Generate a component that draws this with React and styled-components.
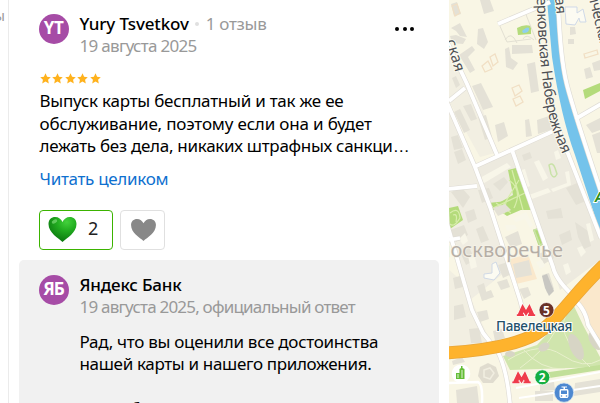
import React from "react";
import styled, { createGlobalStyle } from "styled-components";

const GlobalStyle = createGlobalStyle`
  * {
    box-sizing: border-box;
  }

  body {
    margin: 0;
    background: #fff;
    font-family: "Noto Sans", "Open Sans", sans-serif;
    overflow: hidden;
  }
`;

const Page = styled.div`
  display: grid;
  grid-template-columns: 9px 440px 151px;
  width: 600px;
  height: 403px;
  overflow: hidden;
`;

const Edge = styled.div`
  border-right: 1px solid #ebebeb;
  padding-top: 4px;
  display: flex;
  justify-content: flex-end;
  overflow: hidden;
  color: #999;
  font-size: 14px;
  line-height: 24px;
`;

const EdgeText = styled.span`
  margin-right: 3px;
`;

const Panel = styled.main`
  padding: 0 10px;
  background: #fff;
  overflow: hidden;
`;

const Review = styled.section`
  padding: 13px 20px 0 20.5px;
`;

const Header = styled.div`
  display: flex;
  align-items: flex-start;
  height: 46px;
`;

const Avatar = styled.div`
  width: 30px;
  height: 30px;
  margin: 1px 11px 0 -1px;
  flex: none;
  border-radius: 50%;
  background: #a64ca6;
  color: #fff;
  font-size: 17px;
  font-weight: 700;
  line-height: 27px;
  text-align: center;
  letter-spacing: ${(props) => props.$spacing || "0"};
`;

const Author = styled.div`
  flex: 1;
  white-space: nowrap;
`;

const Name = styled.span`
  color: #000;
  font-size: 17px;
  font-weight: 500;
  line-height: 22px;
  letter-spacing: ${(props) => props.$spacing};
`;

const NameRow = styled.div`
  display: flex;
  align-items: center;
  height: 22px;
`;

const Dot = styled.span`
  width: 4px;
  height: 4px;
  margin: 0 7px 0 6px;
  border-radius: 50%;
  background: #e0e0e0;
`;

const Muted = styled.div`
  color: #999;
  font-size: 17px;
  line-height: 22px;
  letter-spacing: ${(props) => props.$spacing};
`;

const MenuButton = styled.button`
  display: flex;
  justify-content: space-between;
  width: 19px;
  margin: 14px 5px 0 0;
  padding: 0;
  border: 0;
  background: none;
`;

const MenuDot = styled.i`
  width: 4px;
  height: 4px;
  border-radius: 50%;
  background: #000;
`;

const Stars = styled.div`
  display: flex;
  gap: 1.6px;
  height: 11px;
  margin-top: 14px;
`;

const Text = styled.div`
  margin-top: ${(props) => props.$top};
  color: #000;
  font-size: 17px;
  line-height: ${(props) => props.$leading};
`;

const Line = styled.div`
  white-space: nowrap;
  letter-spacing: ${(props) => props.$spacing};
`;

const Ellipsis = styled.span`
  font-family: "Liberation Sans", sans-serif;
  line-height: 1;
`;

const More = styled.a`
  display: block;
  margin-top: 10px;
  color: #0e70cf;
  font-size: 17px;
  line-height: 22px;
  letter-spacing: -0.3px;
`;

const Reactions = styled.div`
  display: flex;
  gap: 7px;
  margin: 20px 0 0 -0.5px;
`;

const Reaction = styled.button`
  display: flex;
  align-items: center;
  width: ${(props) => (props.$active ? 74 : 45)}px;
  height: 40px;
  padding: 0 0 0 ${(props) => (props.$active ? 7 : 9)}px;
  border: 1px solid ${(props) => (props.$active ? "#3bb300" : "#e0e0e0")};
  border-radius: 4px;
  background: #fff;
  color: #222;
  font-family: inherit;
  font-size: 18px;
`;

const Count = styled.span`
  margin: -3px 0 0 10px;
`;

const Reply = styled.section`
  height: 160px;
  margin-top: 10px;
  padding: 14px 20px 0;
  border-radius: 5px;
  background: #f1f1f1;
`;

const ReplyHeader = styled(Header)`
  padding-left: 0.5px;
`;

const ReplyBody = styled.div`
  padding-left: 40.5px;
`;

const Map = styled.svg`
  display: block;
  width: 151px;
  height: 403px;
`;

function Star() {
  return (
    <svg width="11" height="11" viewBox="0 0 22 22">
      <path
        fill="#ffb21d"
        d="M11 .5l3.2 7 7.3.8-5.4 5.1 1.5 7.6-6.6-3.8L4.4 21l1.5-7.6L.5 8.3l7.3-.8z"
      />
    </svg>
  );
}

const HEART =
  "M15 26C11 22 1 17 1 8C1 3.5 4 1 7.7 1C11 1 13.8 3 15 6C16.2 3 19 1 22.3 1C26 1 29 3.500 29 8C29 17 19 22 15 26Z";

const buildings = [
  "451,4 457,2 461,14 454,16", "480,0 490,0 494,11 484,14", "451,28 460,23 467,37 460,36 456,31",
  "450,36 456,35 466,39 463,44 452,43", "478,29 483,28 488,42 484,49 477,44", "459,55 472,46 475,50 468,57 475,70 470,73",
  "472,86 481,83 493,107 483,110", "512,45 532,45 533,53 512,54", "505,49 509,47 511,58 518,63 513,70 506,67",
  "527,64 535,62 539,91 531,93", "568,39 574,39 574,44 568,44", "570,27 575,27 576,34 570,35",
  "584,69 590,67 593,77 586,79", "592,63 600,60 600,70 594,71", "452,78 456,76 460,85 456,88",
  "454,112 460,109 470,130 464,133", "463,106 471,104 477,119 471,121", "478,117 486,115 492,137 485,140",
  "495,125 504,122 508,136 498,142", "537,120 552,115 556,128 538,134", "525,120 529,119 532,136 526,137",
  "586,125 600,118 600,130 592,133", "592,135 600,132 600,153 597,153", "451,137 458,135 463,148 454,150",
  "454,152 462,149 466,160 458,164", "451,192 462,188 470,197 463,208", "493,184 504,177 508,182 500,191",
  "478,190 489,188 493,198 482,203", "522,155 530,152 532,158 524,161", "566,188 577,183 586,201 576,205",
  "450,230 464,225 468,235 456,242", "465,212 474,209 477,219 468,223", "460,252 469,247 475,260 466,265",
  "476,229 483,226 489,240 481,243", "505,237 518,231 522,244 511,248", "493,208 505,204 511,210 498,216",
  "546,211 561,208 563,218 548,219", "575,222 588,231 591,246 584,249 578,237", "559,235 570,230 572,240 562,245",
  "513,264 529,260 532,275 516,278", "538,254 551,249 554,258 544,264", "542,275 549,273 554,289 547,293",
  "477,286 484,283 488,299 482,301", "498,265 508,262 514,273 503,278", "519,289 528,287 531,295 524,299",
  "453,278 463,275 467,286 455,289", "454,306 463,304 466,317 454,320", "469,329 479,328 482,343 471,343",
  "493,331 502,329 505,338 495,341", "477,312 487,310 489,319 480,322", "456,390 477,386 479,403 457,403",
  "540,383 554,382 555,390 540,391", "575,383 600,379 600,392 574,396", "535,391 553,391 553,401 535,401",
  "452,361 462,357 465,362 453,365", "483,293 491,290 494,297 485,300", "497,282 507,279 510,287 501,290",
];

const lightBlocks = [
  "478,179 507,163 511,167 481,185", "521,170 525,169 530,186 526,188", "534,162 539,160 548,178 543,181",
  "529,195 548,188 551,192 532,199", "565,172 569,171 571,185 553,192 551,189 567,183", "554,152 558,150 561,158 556,160",
  "513,219 526,212 533,225 530,228 525,219 516,222", "505,225 515,225 517,229 507,231", "459,239 465,233 468,241 463,245",
  "468,256 474,253 477,267 471,269", "563,265 568,263 571,272 566,275", "577,248 582,246 586,252 581,257",
  "586,224 590,223 594,240 590,242", "536,262 542,260 545,266 540,269", "553,125 557,123 560,128 555,130",
];

const outlines = [
  "452,6 457,4 460,13 455,16", "482,66 488,61 492,69 485,72", "490,57 495,54 498,62 493,66",
  "512,88 519,85 522,91 515,96", "513,99 520,96 523,102 516,106", "584,54 597,50 598,54 585,58",
];

const roads = [
  "M445,37 L467,84 L497,155", "M446,100 L475,167 L490,207 L520,300 L524,315", "M474,167 L560,128",
  "M512,150 L533,210 L553,267 Q556,281 577,299", "M558,-2 Q560,58 567,85 T601,192", "M558,128 L601,238",
  "M498,24 L550,2", "M577,118 L601,104", "M449,101 L465,88", "M448,189 L477,186",
  "M446,220 L472,310 L483,333 L498,352 Q507,370 510,404", "M449,240 L460,238", "M570,297 Q585,306 588,325 L602,348",
];

function MetroMark({ x, y }) {
  return (
    <path
      transform={`translate(${x} ${y})`}
      fill="#ef3c4b"
      stroke="#fff"
      strokeWidth="1"
      paintOrder="stroke"
      d="M0 12V10.300H1L5.700 0L9.200 6L12.700 0L17.400 10.300H18.400V12H11.200V10.300H12.300L11.700 8.300L9.200 12L6.700 8.300L6.100 10.300H7.200V12Z"
    />
  );
}

function CityMap() {
  return (
    <Map viewBox="449 0 151 403" fontFamily='"Noto Sans", sans-serif'>
      <rect x="449" width="151" height="403" fill="#f9f6e5" />
      <path fill="#edeadf" d="M474,167 L512,150 L558,130 L600,237 L600,260 L560,290 L533,210 L490,210Z" />
      <path fill="#f0ede2" d="M449,106 L475,167 L490,210 L510,268 L470,300 L449,230Z" />
      <path fill="#f2efe2" d="M449,270 L463,282 L492,345 L449,350Z M449,47 L483,110 L495,153 L480,157 L449,101Z" />
      <path fill="#fae8cc" d="M507,260 L528,254 L537,279 L516,284Z M577,293 L600,273 L600,340 L584,320Z" />

      <g fill="#b4db7b">
        <path d="M508,170 L516,168 L531,210 L490,210 L493,206 L513,195Z" />
        <path d="M488,203 L528,199 L530,206 L507,216Z" />
        <path d="M449,208 L458,206 L463,220 L450,229Z" />
        <path d="M517,28 Q524,24 531,26 V34 L518,35Z" />
        <path d="M583,90 L600,83 V91 L585,99Z" />
        <path d="M533,230 L538,228 L544,244 L539,247Z" />
      </g>
      <path fill="#d0e5ad" d="M573,304 L583,325 L600,357 V367 L510,370 L503,356 L537,345 L554,327Z" />
      <path fill="#c2df99" d="M535,374 L600,365 V370 L537,380Z" />
      <path fill="#8fd0ed" d="M522,31 Q527,26 529,28 Q530,33 523,33Z" />

      <g fill="none" stroke="#d8edac" strokeWidth="1.200">
        <path d="M512,170 L523,210 M503,206 L519,180 M493,208 L525,193 M509,180 Q523,190 514,208" />
        <path d="M496,203 L511,213 M506,202 L504,214" />
        <path d="M450,213 Q459,206 460,218 Q454,228 450,224 M453,215 Q458,213 456,222" />
      </g>
      <path fill="none" stroke="#e8f0cc" strokeWidth="1" d="M508,360 Q540,340 562,355 T600,360 M523,349 Q540,370 565,369 M570,310 Q550,330 590,367 M520,368 Q545,350 556,330" />

      <g fill="#e4e1d6">
        {buildings.map((points) => (
          <polygon key={points} points={points} />
        ))}
      </g>
      <g fill="#f8f6e9">
        {lightBlocks.map((points) => (
          <polygon key={points} points={points} />
        ))}
      </g>
      <g fill="none" stroke="#f1dfc4" strokeWidth="1.300">
        {outlines.map((points) => (
          <polygon key={points} points={points} />
        ))}
      </g>
      <path fill="none" stroke="#e3e0d3" strokeWidth="1" d="M499,24 L507,42 L531,39 M525,12 L536,40 M505,40 Q511,30 517,43 M523,39 Q526,33 534,40" />
      <path fill="#fcfbf2" stroke="#cfd9e8" strokeWidth="1" d="M565,7 H577 V13 L583,9 L586,22 L580,22 L579,18 L575,25 L566,24Z" />
      <path fill="#fcfbf2" stroke="#d0d9e6" strokeWidth="1" d="M492,264 L496,262 L500,273 L494,280 L484,278 V274 L492,273Z" />
      <path fill="#c8c7c2" d="M542,276 L547,274 L554,291 L549,296 L545,288Z" />
      <g fill="none" stroke="#c9e2a8" strokeWidth="1.500">
        <path d="M549,165 Q553,162 555,168 L557,174 Q554,180 551,174Z" />
        <path d="M534,230 L538,229 L543,243 L540,245Z" />
      </g>
      <g fill="#d7d5c5">
        <ellipse cx="576" cy="347" rx="6" ry="14" transform="rotate(-24 576 347)" />
        <ellipse cx="544" cy="347" rx="6" ry="4" transform="rotate(-30 544 347)" />
        <ellipse cx="510" cy="354" rx="5" ry="3" />
        <ellipse cx="595" cy="341" rx="5" ry="10" transform="rotate(-30 595 341)" />
      </g>
      <path fill="#e0dccf" d="M480,367 L488,363 L496,367 L499,376 L493,383 L483,383 L478,376Z" />
      <path fill="none" stroke="#f1eee1" strokeWidth="1.500" d="M484,370 L490,368 L494,373 L490,379 L484,377Z" />

      <path fill="#74c3eb" d="M547,0 H558 Q560,48 565,78 T585,149 L600,185 V232 L575,155 Q561,117 552,57Z" />

      <g fill="none" stroke="#dedbd4" strokeWidth="5" strokeLinejoin="round">
        {roads.map((d) => (
          <path key={d} d={d} />
        ))}
      </g>
      <g fill="none" stroke="#fff" strokeWidth="3.800" strokeLinejoin="round">
        {roads.map((d) => (
          <path key={d} d={d} />
        ))}
      </g>
      <path fill="none" stroke="#fff" strokeWidth="2.500" d="M449,383 L478,382 Q483,384 482,403" />
      <path fill="none" stroke="#fff" strokeWidth="1.800" d="M516,388 L600,372 M519,398 L600,386" />

      <path fill="none" stroke="#e8a63a" strokeWidth="13" d="M446,353 Q509,349 536,334 C557,322 568,300 604,265" />
      <path fill="none" stroke="#feb32d" strokeWidth="11.500" d="M446,353 Q509,349 536,334 C557,322 568,300 604,265" />

      <g fill="#4e5054" stroke="#fbf9ed" strokeWidth="2" paintOrder="stroke">
        <path id="quay" fill="none" stroke="none" d="M536.500,-12 Q538,57 546,104 Q550,128 567,164" />
        <text fontSize="15">
          <textPath href="#quay" startOffset="9" textLength="161">ерковская Набережная</textPath>
        </text>
        <text fontSize="14.500" transform="translate(555 -2) rotate(84)">ая</text>
        <text fontSize="15" transform="translate(588 -5) rotate(76)" textLength="56">ическая</text>
        <text fontSize="15" transform="translate(446 41) rotate(73)" textLength="33">ская</text>
      </g>
      <text x="435" y="257" fontSize="20" fill="#b5aea6" stroke="#f6f3e8" strokeWidth="1.500" paintOrder="stroke" textLength="128">москворечье</text>
      <text x="595" y="202" fontSize="14" fontWeight="700" fontStyle="italic" fill="#2e8f1d" stroke="#fff" strokeWidth="2" paintOrder="stroke">А</text>

      <MetroMark x={516.8} y={304} />
      <circle cx="546.500" cy="310" r="7.500" fill="#693127" stroke="#fff" strokeWidth=".7" />
      <text x="546.500" y="314.500" fontSize="12" fontWeight="700" fill="#fff" textAnchor="middle">5</text>
      <text x="496" y="331" fontSize="13.500" fontWeight="500" fill="#245069" stroke="#fff" strokeWidth="2" paintOrder="stroke" textLength="76.500">Павелецкая</text>
      <MetroMark x={512.3} y={371.300} />
      <circle cx="542.300" cy="377.300" r="7.500" fill="#14ae42" stroke="#fff" strokeWidth=".7" />
      <text x="542.300" y="381.700" fontSize="12" fontWeight="700" fill="#fff" textAnchor="middle">2</text>

      <circle cx="461" cy="373.700" r="9.300" fill="#fff" />
      <path fill="#64bd37" d="M456,373 H459.500 V369 L461,368 V366 H462.500 V368 L464.500,369 V379 H456Z" />
      <path stroke="#fff" strokeWidth=".8" d="M457,375H459M457,377H459M461,371H463M461,373H463M461,375H463M461,377H463" />

      <circle cx="564" cy="392.600" r="9.700" fill="#4d88d0" stroke="#d9e4ee" strokeWidth=".8" />
      <path fill="#fff" d="M561.500,386.500 H567 V387.500 H565 V389 H567 Q568.500,389 568.500,391 V396.500 L567.500,398 H560.500 L559.500,396.500 V391 Q559.500,389 561,389 H563.500 V387.500 H561.500Z" />
      <rect x="561" y="390.500" width="6" height="3.500" fill="#4d88d0" />
      <circle cx="561.500" cy="396" r=".8" fill="#4d88d0" />
      <circle cx="566.500" cy="396" r=".8" fill="#4d88d0" />
    </Map>
  );
}

function App() {
  return (
    <>
      <GlobalStyle />
      <Page>
        <Edge>
          <EdgeText>ы</EdgeText>
        </Edge>
        <Panel>
          <Review>
            <Header>
              <Avatar $spacing="-0.5px">YT</Avatar>
              <Author>
                <NameRow>
                  <Name $spacing="-0.15px">Yury Tsvetkov</Name>
                  <Dot />
                  <Muted $spacing="-0.3px">1 отзыв</Muted>
                </NameRow>
                <Muted $spacing="-0.7px">19 августа 2025</Muted>
              </Author>
              <MenuButton aria-label="Меню">
                <MenuDot />
                <MenuDot />
                <MenuDot />
              </MenuButton>
            </Header>
            <Stars>
              {[1, 2, 3, 4, 5].map((n) => (
                <Star key={n} />
              ))}
            </Stars>
            <Text $top="6px" $leading="22.5px">
              <Line $spacing="-0.24px">Выпуск карты бесплатный и так же ее</Line>
              <Line $spacing="-0.17px">обслуживание, поэтому если она и будет</Line>
              <Line $spacing="-0.29px">
                лежать без дела, никаких штрафных санкци<Ellipsis>…</Ellipsis>
              </Line>
            </Text>
            <More>Читать целиком</More>
            <Reactions>
              <Reaction $active>
                <svg width="31" height="27" viewBox="0 0 30 27">
                  <defs>
                    <radialGradient id="heartFill" cx=".65" cy=".2" r=".85">
                      <stop offset="0" stopColor="#43d13c" />
                      <stop offset=".4" stopColor="#22ad20" />
                      <stop offset="1" stopColor="#08710d" />
                    </radialGradient>
                  </defs>
                  <path fill="url(#heartFill)" d={HEART} />
                  <ellipse cx="7" cy="5.500" rx="3" ry="1.800" fill="#83df7c" opacity=".65" transform="rotate(-30 7 5.500)" />
                </svg>
                <Count>2</Count>
              </Reaction>
              <Reaction>
                <svg width="27" height="24" viewBox="0 0 30 27">
                  <path fill="#888" d={HEART} />
                </svg>
              </Reaction>
            </Reactions>
          </Review>
          <Reply>
            <ReplyHeader>
              <Avatar $spacing="-1px">ЯБ</Avatar>
              <Author>
                <NameRow>
                  <Name $spacing="-0.2px">Яндекс Банк</Name>
                </NameRow>
                <Muted $spacing="-0.79px">19 августа 2025, официальный ответ</Muted>
              </Author>
            </ReplyHeader>
            <ReplyBody>
              <Text $top="11px" $leading="22px">
                <Line $spacing="-0.28px">Рад, что вы оценили все достоинства</Line>
                <Line $spacing="-0.33px">нашей карты и нашего приложения.</Line>
              </Text>
              <Text $top="23.5px" $leading="22px">
                <Line $spacing="0.3px">Спасибо</Line>
              </Text>
            </ReplyBody>
          </Reply>
        </Panel>
        <CityMap />
      </Page>
    </>
  );
}

export default App;
